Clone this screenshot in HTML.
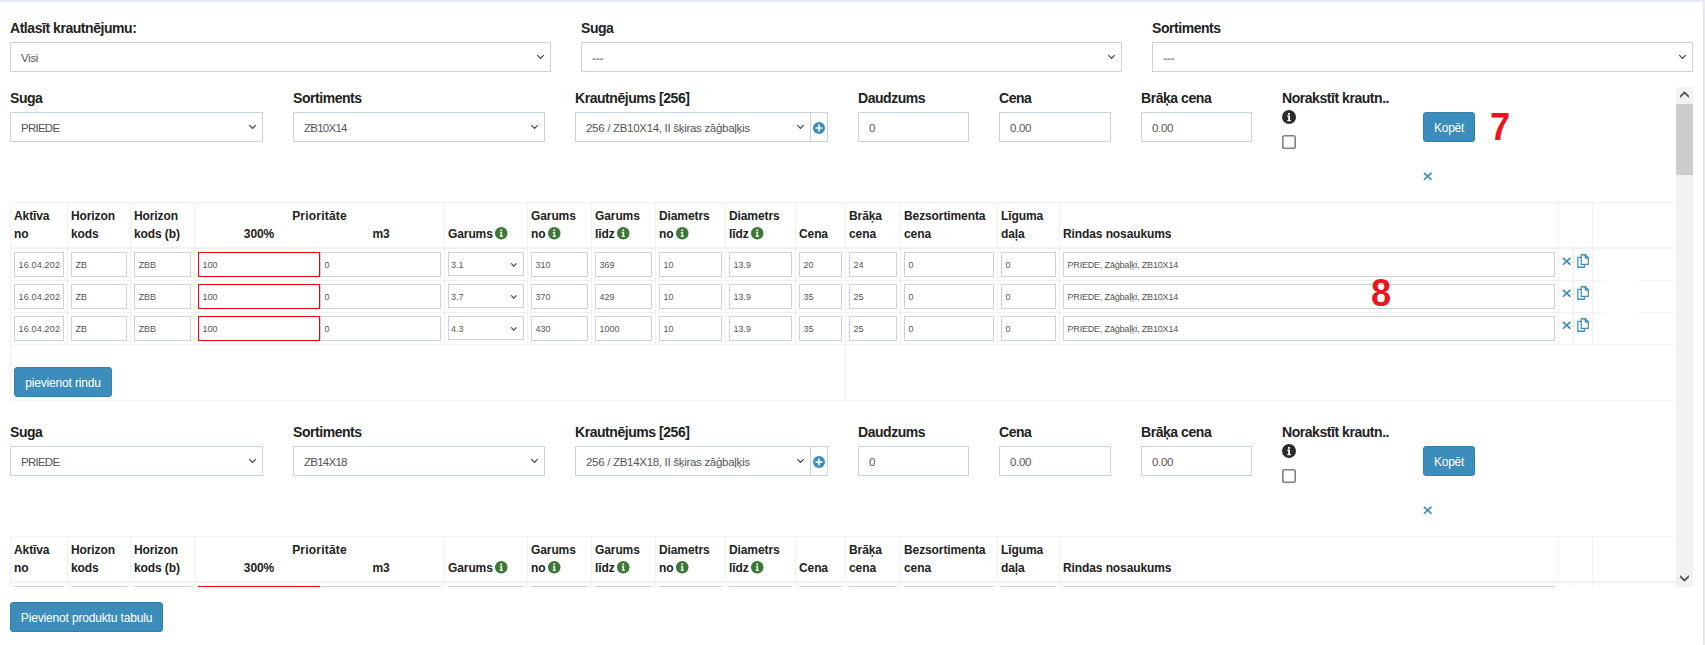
<!DOCTYPE html>
<html lang="lv"><head><meta charset="utf-8"><title>Krautnējumi</title>
<style>
*{box-sizing:border-box}
html,body{margin:0;padding:0}
body{width:1705px;height:645px;overflow:hidden;background:#e9edf3;font-family:"Liberation Sans",sans-serif;color:#222;position:relative}
.panel{position:absolute;left:0;top:2px;width:1703px;height:643px;background:#fff;box-shadow:0 0 2px rgba(0,0,0,.08)}
.top{position:absolute;left:10px;top:0;width:1683px;height:87px}
.lb{position:absolute;top:16px;font-weight:bold;font-size:14px;line-height:20px;letter-spacing:-.45px;white-space:nowrap;color:#222}
.fc{position:absolute;top:40px;height:30px;border:1px solid #ccd2dc;background:#fff;font-size:11.5px;line-height:28px;padding-left:10px;color:#555;letter-spacing:-.3px;white-space:nowrap;overflow:hidden}
.fc span{position:relative;top:1px}
.fc .chev{position:absolute;right:5.3px;top:11.4px}
.fc .ph{color:#9a9a9a;font-weight:bold;top:.5px;font-size:12.5px;letter-spacing:-.45px;line-height:20px}
.fc .up{letter-spacing:-.75px}
.scroll{position:absolute;left:10px;top:85px;width:1683px;height:500px;overflow:hidden}
.inner{position:absolute;left:0;top:0;width:1666px}
.blk{position:relative;height:334px;width:1666px}
.blk .lb{top:1px}
.blk .fc{top:25px}
.addon{position:absolute;left:800px;top:25px;width:18px;height:30px;border:1px solid #ccd2dc;border-left:0}
.addon svg{position:absolute;left:3px;top:8.5px}
.ib{position:absolute;left:1272px;top:23px}
.cb{position:absolute;left:1272px;top:48px}
.btn{position:absolute;background:#3c8dbc;border:1px solid #367fa9;border-radius:3px;color:#fff;font-size:12px;line-height:30px;height:30px;text-align:center;letter-spacing:-.3px;white-space:nowrap}
.add,.ptb{letter-spacing:-.16px}
.kop{left:1413px;top:25px;width:52px}
.delb{position:absolute;left:1413px;top:85px;line-height:0}
.tb{position:absolute;left:0;top:115px;width:1666px;table-layout:fixed;border-collapse:separate;border-spacing:0;border-bottom:1px solid #f1f1f1;border-right:1px solid #f1f1f1}
.tb th,.tb td{border-left:1px solid #f1f1f1;border-top:1px solid #f1f1f1;padding:0;position:relative}
.tb th{height:45px;vertical-align:bottom;text-align:left;font-size:12px;line-height:18px;letter-spacing:-.1px;padding:0 0 4px 3px;white-space:nowrap;color:#222;font-weight:bold}
.tb tbody tr:first-child td{border-top:2px solid #f1f1f1}
.tb td{height:32px;vertical-align:top}
.tb tbody tr:first-child td{height:33px}
.in{display:block;font-style:normal;margin:3px 3px 0 3px;height:24.5px;border:1px solid #ccd2dc;font-size:9px;line-height:25px;padding-left:3.5px;color:#555;letter-spacing:0;white-space:nowrap;overflow:hidden;position:relative;background:#fff}

.dt span{display:block;width:42px;overflow:hidden;letter-spacing:.18px}
.in.nm{letter-spacing:-.18px}
.two{white-space:nowrap}
.two .in{display:inline-block;vertical-align:top;width:122px;margin-right:0}
.two .in+.in{margin-left:0;width:121px}
.in.red{border-color:#e30613}
.in.ss .chev{position:absolute;right:5px;top:9px}
.in.ss{height:23.5px;padding-left:2px}
.ig{vertical-align:-1.6px;margin-left:-.6px}
.c{text-align:center;letter-spacing:.2px;margin-left:-3px}
.half{display:flex}
.half span{display:block;text-align:center;width:122px}
.pr{padding-left:3px !important}
.ic{text-align:center;line-height:0}
.ic svg{margin-top:8px}
.ic .ci{margin-top:5px}
.ic .xi{position:relative;left:.8px}
.ft td{height:56px}
.add{left:3px;top:22px;width:98px}
.sb{position:absolute;left:1666px;top:0;width:17px;height:500px;background:#f1f1f1}
.sb .th{position:absolute;left:0;top:17px;width:17px;height:71px;background:#cdcdcd}
.sb svg{position:absolute;left:4px}
.big{transform:scaleX(.95);transform-origin:0 0;position:absolute;font-weight:bold;color:#ea151d;font-size:38px;line-height:38px}
.patch{position:absolute;background:#fff}
.ptb{left:10px;top:602px;width:153px}
</style></head>
<body>
<div class="panel">
<div class="top"><label class="lb" style="left:0px">Atlasīt krautnējumu:</label><div class="fc sel " style="left:0px;width:541px"><span>Visi</span><svg class="chev" width="9" height="6" viewBox="0 0 9 6"><path d="M1.3 1.2 L4.5 4.4 L7.7 1.2" fill="none" stroke="#404040" stroke-width="1.2"/></svg></div><label class="lb" style="left:571px">Suga</label><div class="fc sel " style="left:571px;width:541px"><span><span class="ph">---</span></span><svg class="chev" width="9" height="6" viewBox="0 0 9 6"><path d="M1.3 1.2 L4.5 4.4 L7.7 1.2" fill="none" stroke="#404040" stroke-width="1.2"/></svg></div><label class="lb" style="left:1142px">Sortiments</label><div class="fc sel " style="left:1142px;width:541px"><span><span class="ph">---</span></span><svg class="chev" width="9" height="6" viewBox="0 0 9 6"><path d="M1.3 1.2 L4.5 4.4 L7.7 1.2" fill="none" stroke="#404040" stroke-width="1.2"/></svg></div></div>
<div class="scroll"><div class="inner">
<div class="blk">
<label class="lb" style="left:0px">Suga</label><div class="fc sel " style="left:0px;width:253px"><span class="up">PRIEDE</span><svg class="chev" width="9" height="6" viewBox="0 0 9 6"><path d="M1.3 1.2 L4.5 4.4 L7.7 1.2" fill="none" stroke="#404040" stroke-width="1.2"/></svg></div><label class="lb" style="left:283px">Sortiments</label><div class="fc sel " style="left:283px;width:252px"><span class="up">ZB10X14</span><svg class="chev" width="9" height="6" viewBox="0 0 9 6"><path d="M1.3 1.2 L4.5 4.4 L7.7 1.2" fill="none" stroke="#404040" stroke-width="1.2"/></svg></div><label class="lb" style="left:565px">Krautnējums [256]</label><div class="fc sel kr" style="left:565px;width:236px"><span>256 / ZB10X14, II šķiras zāģbaļķis</span><svg class="chev" width="9" height="6" viewBox="0 0 9 6"><path d="M1.3 1.2 L4.5 4.4 L7.7 1.2" fill="none" stroke="#404040" stroke-width="1.2"/></svg></div><div class="addon"><svg class="plus" width="12" height="12" viewBox="0 0 12 12"><circle cx="6" cy="6" r="6" fill="#3c8dbc"/><path d="M5.2 2.5h1.6v2.7h2.7v1.6H6.8v2.7H5.2V6.8H2.5V5.2h2.7z" fill="#fff"/></svg></div><label class="lb" style="left:848px">Daudzums</label><div class="fc" style="left:848px;width:111px"><span>0</span></div><label class="lb" style="left:989px">Cena</label><div class="fc" style="left:989px;width:112px"><span>0.00</span></div><label class="lb" style="left:1131px">Brāķa cena</label><div class="fc" style="left:1131px;width:111px"><span>0.00</span></div><label class="lb" style="left:1272px">Norakstīt krautn..</label><svg class="ib" width="14" height="14" viewBox="0 0 14 14"><circle cx="7" cy="7" r="7" fill="#2b2b2b"/><path d="M5.4 5.6h2.6v4.3h0.8v1.3H5.3V9.9h0.9V6.9H5.4z M6 2.9h2v1.9H6z" fill="#fff"/></svg><svg class="cb" width="14" height="14" viewBox="0 0 14 14"><rect x="0.8" y="0.8" width="12.4" height="12.4" rx="1.8" fill="#fff" stroke="#80808c" stroke-width="1.6"/></svg><span class="btn kop">Kopēt</span><span class="delb"><svg class="xi" width="9.4" height="8.6" viewBox="0 0 10 10" preserveAspectRatio="none"><path d="M1 1 L9 9 M9 1 L1 9" fill="none" stroke="#3c8dbc" stroke-width="1.9"/></svg></span>
<table class="tb"><colgroup><col style="width:57px"><col style="width:63px"><col style="width:64px"><col style="width:250px"><col style="width:83px"><col style="width:64px"><col style="width:64px"><col style="width:70px"><col style="width:70px"><col style="width:50px"><col style="width:55px"><col style="width:97px"><col style="width:62px"><col style="width:499px"><col style="width:15px"><col style="width:19px"><col style="width:84px"></colgroup>
<thead><tr><th>Aktīva<br>no</th><th>Horizon<br>kods</th><th>Horizon<br>kods (b)</th><th class="pr"><div class="c">Prioritāte</div><div class="half"><span>300%</span><span>m3</span></div></th><th>Garums <svg class="ig" width="12.5" height="12.5" viewBox="0 0 14 14"><circle cx="7" cy="7" r="7" fill="#3a7a35"/><path d="M5.4 5.6h2.6v4.3h0.8v1.3H5.3V9.9h0.9V6.9H5.4z M6 2.9h2v1.9H6z" fill="#fff"/></svg></th><th>Garums<br>no <svg class="ig" width="12.5" height="12.5" viewBox="0 0 14 14"><circle cx="7" cy="7" r="7" fill="#3a7a35"/><path d="M5.4 5.6h2.6v4.3h0.8v1.3H5.3V9.9h0.9V6.9H5.4z M6 2.9h2v1.9H6z" fill="#fff"/></svg></th><th>Garums<br>līdz <svg class="ig" width="12.5" height="12.5" viewBox="0 0 14 14"><circle cx="7" cy="7" r="7" fill="#3a7a35"/><path d="M5.4 5.6h2.6v4.3h0.8v1.3H5.3V9.9h0.9V6.9H5.4z M6 2.9h2v1.9H6z" fill="#fff"/></svg></th><th>Diametrs<br>no <svg class="ig" width="12.5" height="12.5" viewBox="0 0 14 14"><circle cx="7" cy="7" r="7" fill="#3a7a35"/><path d="M5.4 5.6h2.6v4.3h0.8v1.3H5.3V9.9h0.9V6.9H5.4z M6 2.9h2v1.9H6z" fill="#fff"/></svg></th><th>Diametrs<br>līdz <svg class="ig" width="12.5" height="12.5" viewBox="0 0 14 14"><circle cx="7" cy="7" r="7" fill="#3a7a35"/><path d="M5.4 5.6h2.6v4.3h0.8v1.3H5.3V9.9h0.9V6.9H5.4z M6 2.9h2v1.9H6z" fill="#fff"/></svg></th><th>Cena</th><th>Brāķa<br>cena</th><th>Bezsortimenta<br>cena</th><th>Līguma<br>daļa</th><th>Rindas nosaukums</th><th colspan="2"></th><th></th></tr></thead>
<tbody><tr><td><i class="in dt"><span>16.04.2024</span></i></td><td><i class="in">ZB</i></td><td><i class="in">ZBB</i></td><td class="two"><i class="in red">100</i><i class="in">0</i></td><td><i class="in ss">3.1<svg class="chev" width="9" height="6" viewBox="0 0 9 6"><path d="M2.1 1.4 L4.8 4.2 L7.5 1.4" fill="none" stroke="#444" stroke-width="1.1"/></svg></i></td><td><i class="in">310</i></td><td><i class="in">369</i></td><td><i class="in">10</i></td><td><i class="in">13.9</i></td><td><i class="in">20</i></td><td><i class="in">24</i></td><td><i class="in">0</i></td><td><i class="in">0</i></td><td><i class="in nm">PRIEDE, Zāģbaļķi, ZB10X14</i></td><td class="ic"><svg class="xi" width="9.4" height="8.6" viewBox="0 0 10 10" preserveAspectRatio="none"><path d="M1 1 L9 9 M9 1 L1 9" fill="none" stroke="#3c8dbc" stroke-width="1.9"/></svg></td><td class="ic"><svg class="ci" width="12" height="14" viewBox="0 0 12 13" preserveAspectRatio="none"><path d="M4.2 0.7h4.3l2.8 2.8v6.2H4.2z M8.3 0.7v3h3" fill="none" stroke="#3c8dbc" stroke-width="1.2" stroke-linejoin="round"/><path d="M4.2 3.2H0.8v9.1h6.6V9.7" fill="none" stroke="#3c8dbc" stroke-width="1.2" stroke-linejoin="round"/></svg></td><td></td></tr>
<tr><td><i class="in dt"><span>16.04.2024</span></i></td><td><i class="in">ZB</i></td><td><i class="in">ZBB</i></td><td class="two"><i class="in red">100</i><i class="in">0</i></td><td><i class="in ss">3.7<svg class="chev" width="9" height="6" viewBox="0 0 9 6"><path d="M2.1 1.4 L4.8 4.2 L7.5 1.4" fill="none" stroke="#444" stroke-width="1.1"/></svg></i></td><td><i class="in">370</i></td><td><i class="in">429</i></td><td><i class="in">10</i></td><td><i class="in">13.9</i></td><td><i class="in">35</i></td><td><i class="in">25</i></td><td><i class="in">0</i></td><td><i class="in">0</i></td><td><i class="in nm">PRIEDE, Zāģbaļķi, ZB10X14</i></td><td class="ic"><svg class="xi" width="9.4" height="8.6" viewBox="0 0 10 10" preserveAspectRatio="none"><path d="M1 1 L9 9 M9 1 L1 9" fill="none" stroke="#3c8dbc" stroke-width="1.9"/></svg></td><td class="ic"><svg class="ci" width="12" height="14" viewBox="0 0 12 13" preserveAspectRatio="none"><path d="M4.2 0.7h4.3l2.8 2.8v6.2H4.2z M8.3 0.7v3h3" fill="none" stroke="#3c8dbc" stroke-width="1.2" stroke-linejoin="round"/><path d="M4.2 3.2H0.8v9.1h6.6V9.7" fill="none" stroke="#3c8dbc" stroke-width="1.2" stroke-linejoin="round"/></svg></td><td></td></tr>
<tr><td><i class="in dt"><span>16.04.2024</span></i></td><td><i class="in">ZB</i></td><td><i class="in">ZBB</i></td><td class="two"><i class="in red">100</i><i class="in">0</i></td><td><i class="in ss">4.3<svg class="chev" width="9" height="6" viewBox="0 0 9 6"><path d="M2.1 1.4 L4.8 4.2 L7.5 1.4" fill="none" stroke="#444" stroke-width="1.1"/></svg></i></td><td><i class="in">430</i></td><td><i class="in">1000</i></td><td><i class="in">10</i></td><td><i class="in">13.9</i></td><td><i class="in">35</i></td><td><i class="in">25</i></td><td><i class="in">0</i></td><td><i class="in">0</i></td><td><i class="in nm">PRIEDE, Zāģbaļķi, ZB10X14</i></td><td class="ic"><svg class="xi" width="9.4" height="8.6" viewBox="0 0 10 10" preserveAspectRatio="none"><path d="M1 1 L9 9 M9 1 L1 9" fill="none" stroke="#3c8dbc" stroke-width="1.9"/></svg></td><td class="ic"><svg class="ci" width="12" height="14" viewBox="0 0 12 13" preserveAspectRatio="none"><path d="M4.2 0.7h4.3l2.8 2.8v6.2H4.2z M8.3 0.7v3h3" fill="none" stroke="#3c8dbc" stroke-width="1.2" stroke-linejoin="round"/><path d="M4.2 3.2H0.8v9.1h6.6V9.7" fill="none" stroke="#3c8dbc" stroke-width="1.2" stroke-linejoin="round"/></svg></td><td></td></tr>
<tr class="ft"><td colspan="10"><span class="btn add">pievienot rindu</span></td><td colspan="7"></td></tr></tbody></table>
</div>
<div class="blk">
<label class="lb" style="left:0px">Suga</label><div class="fc sel " style="left:0px;width:253px"><span class="up">PRIEDE</span><svg class="chev" width="9" height="6" viewBox="0 0 9 6"><path d="M1.3 1.2 L4.5 4.4 L7.7 1.2" fill="none" stroke="#404040" stroke-width="1.2"/></svg></div><label class="lb" style="left:283px">Sortiments</label><div class="fc sel " style="left:283px;width:252px"><span class="up">ZB14X18</span><svg class="chev" width="9" height="6" viewBox="0 0 9 6"><path d="M1.3 1.2 L4.5 4.4 L7.7 1.2" fill="none" stroke="#404040" stroke-width="1.2"/></svg></div><label class="lb" style="left:565px">Krautnējums [256]</label><div class="fc sel kr" style="left:565px;width:236px"><span>256 / ZB14X18, II šķiras zāģbaļķis</span><svg class="chev" width="9" height="6" viewBox="0 0 9 6"><path d="M1.3 1.2 L4.5 4.4 L7.7 1.2" fill="none" stroke="#404040" stroke-width="1.2"/></svg></div><div class="addon"><svg class="plus" width="12" height="12" viewBox="0 0 12 12"><circle cx="6" cy="6" r="6" fill="#3c8dbc"/><path d="M5.2 2.5h1.6v2.7h2.7v1.6H6.8v2.7H5.2V6.8H2.5V5.2h2.7z" fill="#fff"/></svg></div><label class="lb" style="left:848px">Daudzums</label><div class="fc" style="left:848px;width:111px"><span>0</span></div><label class="lb" style="left:989px">Cena</label><div class="fc" style="left:989px;width:112px"><span>0.00</span></div><label class="lb" style="left:1131px">Brāķa cena</label><div class="fc" style="left:1131px;width:111px"><span>0.00</span></div><label class="lb" style="left:1272px">Norakstīt krautn..</label><svg class="ib" width="14" height="14" viewBox="0 0 14 14"><circle cx="7" cy="7" r="7" fill="#2b2b2b"/><path d="M5.4 5.6h2.6v4.3h0.8v1.3H5.3V9.9h0.9V6.9H5.4z M6 2.9h2v1.9H6z" fill="#fff"/></svg><svg class="cb" width="14" height="14" viewBox="0 0 14 14"><rect x="0.8" y="0.8" width="12.4" height="12.4" rx="1.8" fill="#fff" stroke="#80808c" stroke-width="1.6"/></svg><span class="btn kop">Kopēt</span><span class="delb"><svg class="xi" width="9.4" height="8.6" viewBox="0 0 10 10" preserveAspectRatio="none"><path d="M1 1 L9 9 M9 1 L1 9" fill="none" stroke="#3c8dbc" stroke-width="1.9"/></svg></span>
<table class="tb"><colgroup><col style="width:57px"><col style="width:63px"><col style="width:64px"><col style="width:250px"><col style="width:83px"><col style="width:64px"><col style="width:64px"><col style="width:70px"><col style="width:70px"><col style="width:50px"><col style="width:55px"><col style="width:97px"><col style="width:62px"><col style="width:499px"><col style="width:15px"><col style="width:19px"><col style="width:84px"></colgroup>
<thead><tr><th>Aktīva<br>no</th><th>Horizon<br>kods</th><th>Horizon<br>kods (b)</th><th class="pr"><div class="c">Prioritāte</div><div class="half"><span>300%</span><span>m3</span></div></th><th>Garums <svg class="ig" width="12.5" height="12.5" viewBox="0 0 14 14"><circle cx="7" cy="7" r="7" fill="#3a7a35"/><path d="M5.4 5.6h2.6v4.3h0.8v1.3H5.3V9.9h0.9V6.9H5.4z M6 2.9h2v1.9H6z" fill="#fff"/></svg></th><th>Garums<br>no <svg class="ig" width="12.5" height="12.5" viewBox="0 0 14 14"><circle cx="7" cy="7" r="7" fill="#3a7a35"/><path d="M5.4 5.6h2.6v4.3h0.8v1.3H5.3V9.9h0.9V6.9H5.4z M6 2.9h2v1.9H6z" fill="#fff"/></svg></th><th>Garums<br>līdz <svg class="ig" width="12.5" height="12.5" viewBox="0 0 14 14"><circle cx="7" cy="7" r="7" fill="#3a7a35"/><path d="M5.4 5.6h2.6v4.3h0.8v1.3H5.3V9.9h0.9V6.9H5.4z M6 2.9h2v1.9H6z" fill="#fff"/></svg></th><th>Diametrs<br>no <svg class="ig" width="12.5" height="12.5" viewBox="0 0 14 14"><circle cx="7" cy="7" r="7" fill="#3a7a35"/><path d="M5.4 5.6h2.6v4.3h0.8v1.3H5.3V9.9h0.9V6.9H5.4z M6 2.9h2v1.9H6z" fill="#fff"/></svg></th><th>Diametrs<br>līdz <svg class="ig" width="12.5" height="12.5" viewBox="0 0 14 14"><circle cx="7" cy="7" r="7" fill="#3a7a35"/><path d="M5.4 5.6h2.6v4.3h0.8v1.3H5.3V9.9h0.9V6.9H5.4z M6 2.9h2v1.9H6z" fill="#fff"/></svg></th><th>Cena</th><th>Brāķa<br>cena</th><th>Bezsortimenta<br>cena</th><th>Līguma<br>daļa</th><th>Rindas nosaukums</th><th colspan="2"></th><th></th></tr></thead>
<tbody><tr><td><i class="in dt"><span>16.04.2024</span></i></td><td><i class="in">ZB</i></td><td><i class="in">ZBB</i></td><td class="two"><i class="in red">100</i><i class="in">0</i></td><td><i class="in ss">3.1<svg class="chev" width="9" height="6" viewBox="0 0 9 6"><path d="M2.1 1.4 L4.8 4.2 L7.5 1.4" fill="none" stroke="#444" stroke-width="1.1"/></svg></i></td><td><i class="in">310</i></td><td><i class="in">369</i></td><td><i class="in">10</i></td><td><i class="in">13.9</i></td><td><i class="in">20</i></td><td><i class="in">24</i></td><td><i class="in">0</i></td><td><i class="in">0</i></td><td><i class="in nm">PRIEDE, Zāģbaļķi, ZB14X18</i></td><td class="ic"><svg class="xi" width="9.4" height="8.6" viewBox="0 0 10 10" preserveAspectRatio="none"><path d="M1 1 L9 9 M9 1 L1 9" fill="none" stroke="#3c8dbc" stroke-width="1.9"/></svg></td><td class="ic"><svg class="ci" width="12" height="14" viewBox="0 0 12 13" preserveAspectRatio="none"><path d="M4.2 0.7h4.3l2.8 2.8v6.2H4.2z M8.3 0.7v3h3" fill="none" stroke="#3c8dbc" stroke-width="1.2" stroke-linejoin="round"/><path d="M4.2 3.2H0.8v9.1h6.6V9.7" fill="none" stroke="#3c8dbc" stroke-width="1.2" stroke-linejoin="round"/></svg></td><td></td></tr>
<tr><td><i class="in dt"><span>16.04.2024</span></i></td><td><i class="in">ZB</i></td><td><i class="in">ZBB</i></td><td class="two"><i class="in red">100</i><i class="in">0</i></td><td><i class="in ss">3.7<svg class="chev" width="9" height="6" viewBox="0 0 9 6"><path d="M2.1 1.4 L4.8 4.2 L7.5 1.4" fill="none" stroke="#444" stroke-width="1.1"/></svg></i></td><td><i class="in">370</i></td><td><i class="in">429</i></td><td><i class="in">10</i></td><td><i class="in">13.9</i></td><td><i class="in">35</i></td><td><i class="in">25</i></td><td><i class="in">0</i></td><td><i class="in">0</i></td><td><i class="in nm">PRIEDE, Zāģbaļķi, ZB14X18</i></td><td class="ic"><svg class="xi" width="9.4" height="8.6" viewBox="0 0 10 10" preserveAspectRatio="none"><path d="M1 1 L9 9 M9 1 L1 9" fill="none" stroke="#3c8dbc" stroke-width="1.9"/></svg></td><td class="ic"><svg class="ci" width="12" height="14" viewBox="0 0 12 13" preserveAspectRatio="none"><path d="M4.2 0.7h4.3l2.8 2.8v6.2H4.2z M8.3 0.7v3h3" fill="none" stroke="#3c8dbc" stroke-width="1.2" stroke-linejoin="round"/><path d="M4.2 3.2H0.8v9.1h6.6V9.7" fill="none" stroke="#3c8dbc" stroke-width="1.2" stroke-linejoin="round"/></svg></td><td></td></tr>
<tr><td><i class="in dt"><span>16.04.2024</span></i></td><td><i class="in">ZB</i></td><td><i class="in">ZBB</i></td><td class="two"><i class="in red">100</i><i class="in">0</i></td><td><i class="in ss">4.3<svg class="chev" width="9" height="6" viewBox="0 0 9 6"><path d="M2.1 1.4 L4.8 4.2 L7.5 1.4" fill="none" stroke="#444" stroke-width="1.1"/></svg></i></td><td><i class="in">430</i></td><td><i class="in">1000</i></td><td><i class="in">10</i></td><td><i class="in">13.9</i></td><td><i class="in">35</i></td><td><i class="in">25</i></td><td><i class="in">0</i></td><td><i class="in">0</i></td><td><i class="in nm">PRIEDE, Zāģbaļķi, ZB14X18</i></td><td class="ic"><svg class="xi" width="9.4" height="8.6" viewBox="0 0 10 10" preserveAspectRatio="none"><path d="M1 1 L9 9 M9 1 L1 9" fill="none" stroke="#3c8dbc" stroke-width="1.9"/></svg></td><td class="ic"><svg class="ci" width="12" height="14" viewBox="0 0 12 13" preserveAspectRatio="none"><path d="M4.2 0.7h4.3l2.8 2.8v6.2H4.2z M8.3 0.7v3h3" fill="none" stroke="#3c8dbc" stroke-width="1.2" stroke-linejoin="round"/><path d="M4.2 3.2H0.8v9.1h6.6V9.7" fill="none" stroke="#3c8dbc" stroke-width="1.2" stroke-linejoin="round"/></svg></td><td></td></tr>
<tr class="ft"><td colspan="10"><span class="btn add">pievienot rindu</span></td><td colspan="7"></td></tr></tbody></table>
</div>
</div>
<div class="sb"><div class="th"></div><svg width="9" height="7" viewBox="0 0 9 7" style="top:4px;left:4px"><path d="M0.1 4.6 L4.5 0.2 L8.9 4.6 L8.9 6.9 L4.5 2.7 L0.1 6.9z" fill="#505050"/></svg><svg width="9" height="7" viewBox="0 0 9 7" style="top:488px;left:4px"><path d="M0.1 2.4 L4.5 6.8 L8.9 2.4 L8.9 0.1 L4.5 4.3 L0.1 0.1z" fill="#505050"/></svg></div>
</div>
<span class="btn ptb" style="top:600px">Pievienot produktu tabulu</span>
<div class="big" style="left:1490px;top:106px">7</div>
<div class="big" style="left:1370.5px;top:272px">8</div>
<div class="patch" style="left:1606px;top:277px;width:32px;height:35px"></div>
</div>
</body></html>
